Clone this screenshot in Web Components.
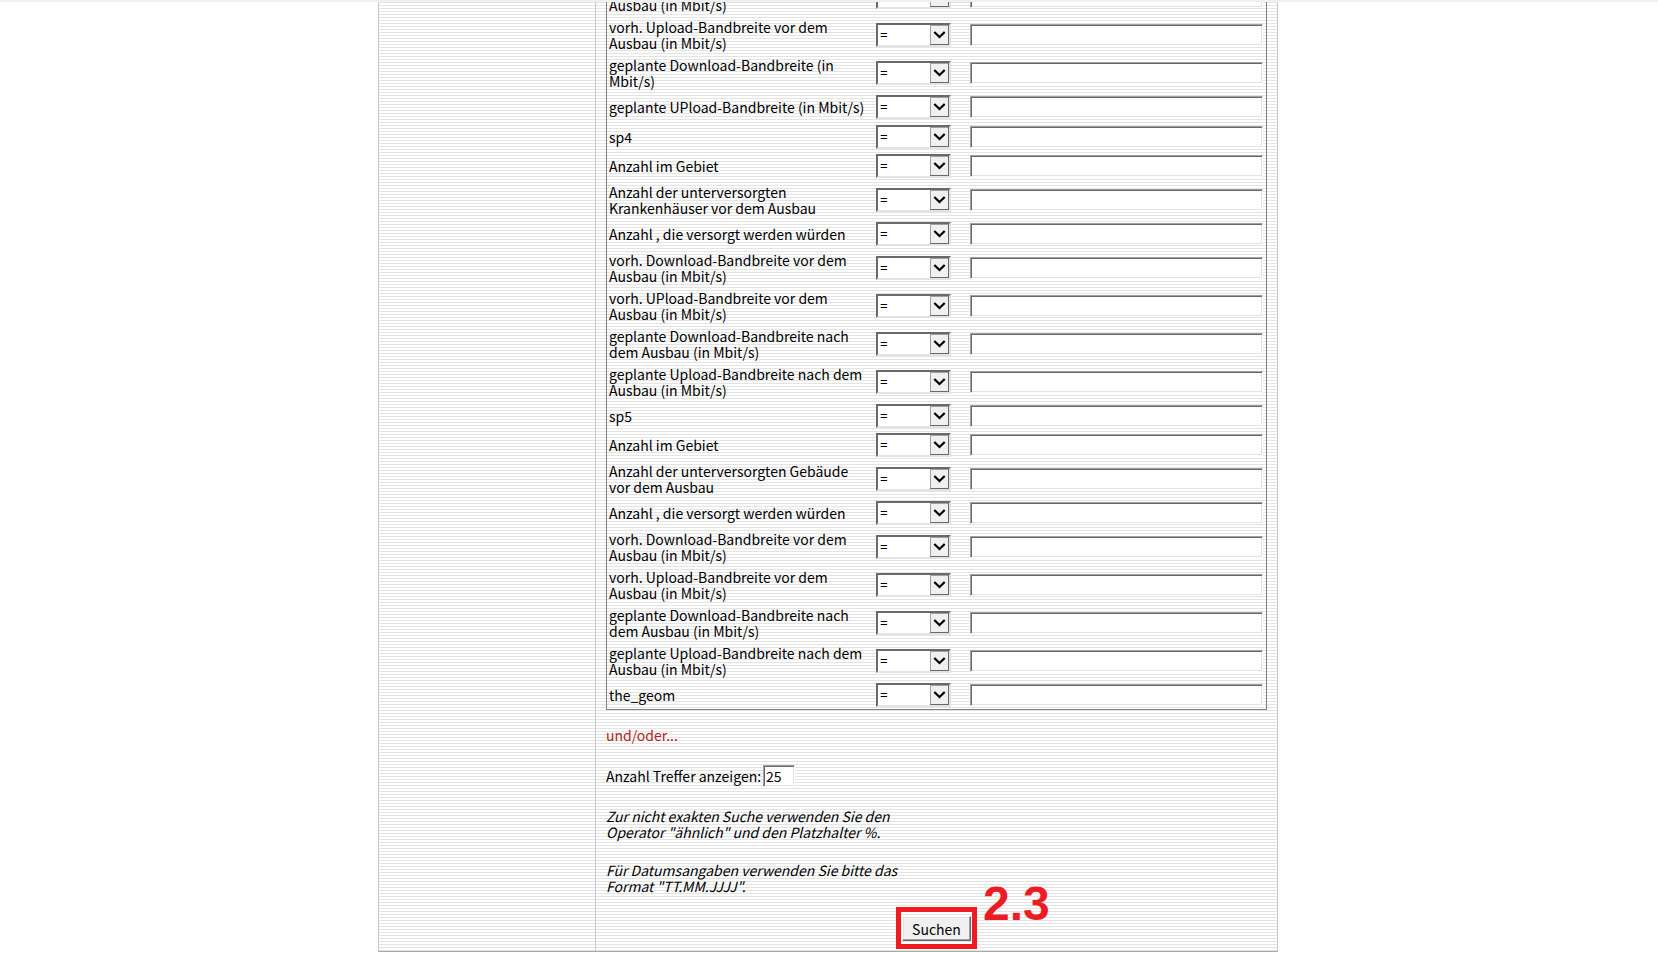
<!DOCTYPE html>
<html lang="de">
<head>
<meta charset="utf-8">
<title>Suche</title>
<style>
  html { background: #fff; }
  body { margin: 0; padding-right: 2px; overflow: hidden; color: #000; font: 14px/16px "Noto Sans CJK SC", "Noto Sans", sans-serif; }
</style>
</head>
<body>
<search-page>
  <search-fields></search-fields>
  <search-options></search-options>
</search-page>

<script>
class SearchPage extends HTMLElement {
  constructor() {
    super();
    this.attachShadow({ mode: "open" }).innerHTML = `
      <style>
        :host { display: block; }
        .bar { position: fixed; inset: 0 0 auto 0; height: 2px; background: #f0f0f0; z-index: 1; }
        .page {
          box-sizing: border-box; max-width: 900px; margin: -22px auto 0;
          display: grid; grid-template-columns: 216px minmax(0, 1fr);
          border: solid #c8c8c8; border-width: 0 1px 1px; border-bottom-color: #a9a9a9;
          background: linear-gradient(#e4e4e4 1px, #fff 1px) 0 0 / 100% 3px;
        }
        main { border-left: 1px solid #c8c8c8; padding: 0 10px 2px; }
      </style>
      <div class="bar"></div>
      <div class="page"><aside></aside><main><slot></slot></main></div>`;
  }
}

class OperatorSelect extends HTMLElement {
  constructor() {
    super();
    this.attachShadow({ mode: "open" }).innerHTML = `
      <style>
        :host { display: block; position: relative; width: 75px; height: 24px; }
        select {
          appearance: none; display: block; box-sizing: border-box; width: 100%; height: 100%; margin: 0; padding: 0 20px 0 2px;
          border: 2px solid; border-color: #696969 #e3e3e3 #e3e3e3 #696969; border-radius: 0;
          background: #fff; color: #000; font: 13px/18px "Liberation Sans", sans-serif;
        }
        svg { position: absolute; right: 2px; top: 2px; pointer-events: none; }
      </style>
      <select aria-label="Operator"><option>=</option><option>&lt;&gt;</option><option>&gt;</option><option>&lt;</option></select>
      <svg width="19" height="20" viewBox="0 0 19 20" shape-rendering="crispEdges">
        <rect width="19" height="20" fill="#f0f0f0"/>
        <path d="M0 .5H18M.5 0V19" stroke="#a0a0a0"/>
        <path d="M0 19.5H19M18.5 0V20" stroke="#696969"/>
        <path d="M4.3 7L9.5 12L14.7 7" fill="none" stroke="#000" stroke-width="2.2" shape-rendering="auto"/>
      </svg>`;
  }
}

class TextField extends HTMLElement {
  connectedCallback() {
    if (this.shadowRoot) return;
    this.attachShadow({ mode: "open" }).innerHTML = `
      <style>
        :host { display: block; }
        input {
          display: block; box-sizing: border-box; width: 100%; height: 22px; margin: 0; padding: 0 2px;
          border: 1px solid; border-color: #a0a0a0 #fff #fff #a0a0a0; border-radius: 0;
          box-shadow: inset 1px 1px #696969, inset -1px -1px #e3e3e3;
          background: #fff; color: #000; font: inherit; outline: 0;
        }
      </style>
      <input type="text">`;
    const input = this.shadowRoot.querySelector("input");
    input.setAttribute("aria-label", this.getAttribute("label"));
    input.value = this.getAttribute("value") || "";
  }
}

const FIELDS = [
  "vorh. Download-Bandbreite vor dem Ausbau (in Mbit/s)",
  "vorh. Upload-Bandbreite vor dem Ausbau (in Mbit/s)",
  "geplante Download-Bandbreite (in Mbit/s)",
  "geplante UPload-Bandbreite (in Mbit/s)",
  "sp4",
  "Anzahl im Gebiet",
  "Anzahl der unterversorgten Krankenhäuser vor dem Ausbau",
  "Anzahl , die versorgt werden würden",
  "vorh. Download-Bandbreite vor dem Ausbau (in Mbit/s)",
  "vorh. UPload-Bandbreite vor dem Ausbau (in Mbit/s)",
  "geplante Download-Bandbreite nach dem Ausbau (in Mbit/s)",
  "geplante Upload-Bandbreite nach dem Ausbau (in Mbit/s)",
  "sp5",
  "Anzahl im Gebiet",
  "Anzahl der unterversorgten Gebäude vor dem Ausbau",
  "Anzahl , die versorgt werden würden",
  "vorh. Download-Bandbreite vor dem Ausbau (in Mbit/s)",
  "vorh. Upload-Bandbreite vor dem Ausbau (in Mbit/s)",
  "geplante Download-Bandbreite nach dem Ausbau (in Mbit/s)",
  "geplante Upload-Bandbreite nach dem Ausbau (in Mbit/s)",
  "the_geom"
];

class SearchFields extends HTMLElement {
  constructor() {
    super();
    // Raw column names (no spaces) get the tighter row.
    const rows = FIELDS.map(name => `
      <tr class="${name.includes(" ") ? "" : "raw"}">
        <th scope="row">${name}</th>
        <td><operator-select></operator-select></td>
        <td><text-field label="${name}"></text-field></td>
      </tr>`).join("");
    this.attachShadow({ mode: "open" }).innerHTML = `
      <style>
        :host { display: block; }
        table { box-sizing: border-box; width: 100%; table-layout: fixed; border-collapse: separate; border-spacing: 0; border: solid #808080; border-width: 0 1px 1px; }
        col.name { width: 269px; }
        col.op { width: 94px; }
        tr { height: 30px; }
        tr.raw { height: 29px; }
        th, td { padding: 0; vertical-align: middle; }
        th { padding: 3px 8px 3px 2px; text-align: left; font-weight: 400; }
        td:last-child { padding-right: 3px; }
      </style>
      <table><colgroup><col class="name"><col class="op"><col></colgroup><tbody>${rows}</tbody></table>`;
  }
}

class SearchOptions extends HTMLElement {
  constructor() {
    super();
    this.attachShadow({ mode: "open" }).innerHTML = `
      <style>
        :host { display: block; }
        p { margin: 0; max-width: 300px; }
        .more { padding-top: 17px; color: #b22222; }
        .limit { display: flex; align-items: center; gap: 2px; margin: 22px 0 21px; }
        .limit text-field { width: 32px; }
        .hint { font-style: italic; margin-bottom: 22px; }
        .actions { display: flex; justify-content: center; margin-top: -9px; }
        .mark { position: relative; border: 5px solid #ed1c24; padding: 4px 1px 3px; }
        .mark b { position: absolute; left: 82px; top: -32px; color: #ed1c24; font: bold 48px/48px "Liberation Sans", sans-serif; }
        button {
          display: block; box-sizing: border-box; width: 69px; height: 25px; margin: 0; padding: 0;
          border: 1px solid; border-color: #fff #696969 #696969 #fff; border-radius: 0;
          box-shadow: inset -1px -1px #a0a0a0, inset 1px 1px #e3e3e3;
          background: #f0f0f0; color: #000; font: inherit;
        }
      </style>
      <p class="more">und/oder...</p>
      <div class="limit"><span>Anzahl Treffer anzeigen:</span><text-field label="Anzahl Treffer anzeigen" value="25"></text-field></div>
      <p class="hint">Zur nicht exakten Suche verwenden Sie den Operator "ähnlich" und den Platzhalter %.</p>
      <p class="hint">Für Datumsangaben verwenden Sie bitte das Format "TT.MM.JJJJ".</p>
      <div class="actions"><div class="mark"><button type="submit">Suchen</button><b>2.3</b></div></div>`;
  }
}

customElements.define("operator-select", OperatorSelect);
customElements.define("text-field", TextField);
customElements.define("search-fields", SearchFields);
customElements.define("search-options", SearchOptions);
customElements.define("search-page", SearchPage);
</script>
</body>
</html>
